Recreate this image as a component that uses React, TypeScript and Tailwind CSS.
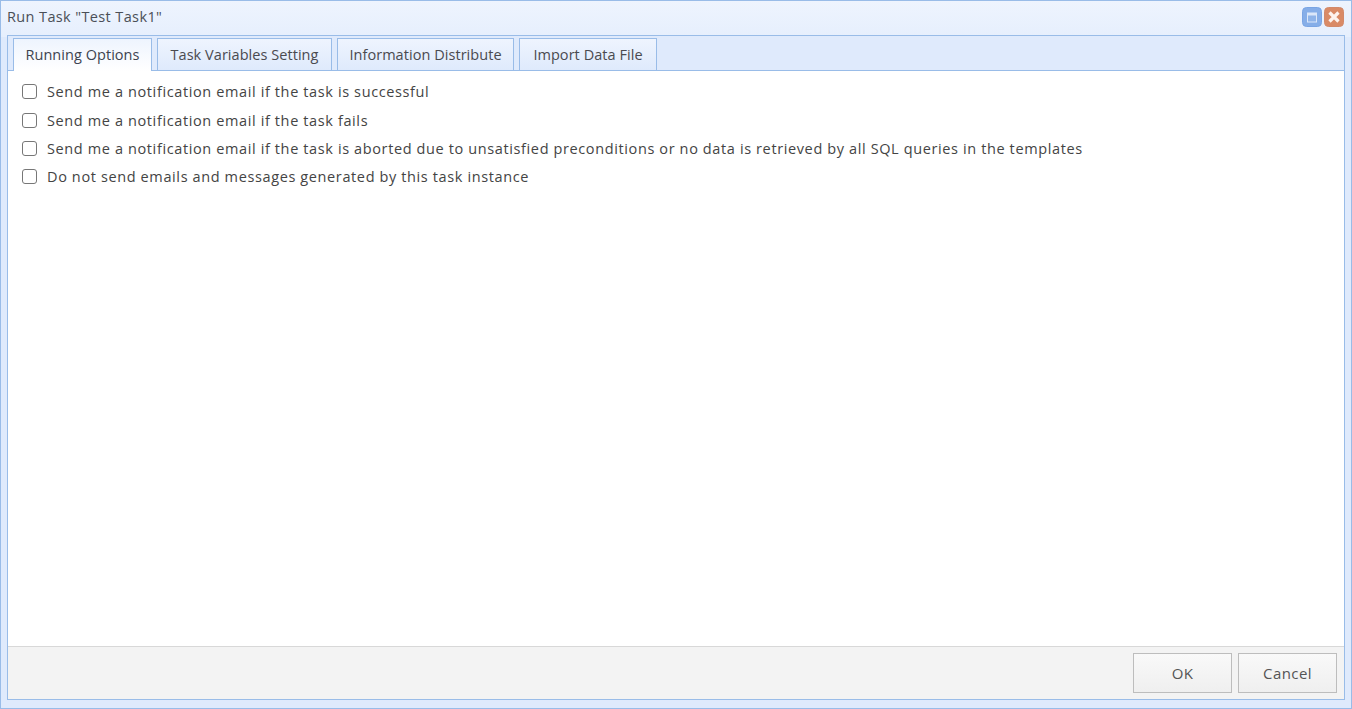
import React from 'react';

const TABS = [
  { label: 'Running Options', cls: 'w-[139px]' },
  { label: 'Task Variables Setting', cls: 'w-[175px]' },
  { label: 'Information Distribute', cls: 'w-[177px]' },
  { label: 'Import Data File', cls: 'w-[138px]' },
];

const OPTIONS = [
  { label: 'Send me a notification email if the task is successful', cls: 'h-[30px]' },
  { label: 'Send me a notification email if the task fails', cls: 'h-[28px]' },
  { label: 'Send me a notification email if the task is aborted due to unsatisfied preconditions or no data is retrieved by all SQL queries in the templates', cls: 'h-[28px]' },
  { label: 'Do not send emails and messages generated by this task instance', cls: 'h-[28px]' },
];

const App: React.FC = () => (
  <div className="h-[709px] w-[1352px] flex flex-col border border-[#99bce8] bg-[#dfeafc] bg-gradient-to-b from-[#eef4fe] to-[#e6effd] bg-[length:100%_36px] bg-no-repeat font-['Open_Sans',sans-serif] text-[14.5px] text-[#444]">
    {/* Title bar */}
    <div className="h-[34px] shrink-0 flex items-center justify-between pl-[6px] pr-[7px]">
      <span className="text-[#4a4f57] -mt-[2px] tracking-[0.38px]">Run Task "Test Task1"</span>
      <div className="flex items-center gap-[2px] -mt-[3px]">
        <svg width="20" height="20" viewBox="0 0 20 20">
          <rect x="0.5" y="0.5" width="19" height="19" rx="4" fill="#86aee8" stroke="#7aa5e4" />
          <rect x="5" y="5.5" width="10" height="10" fill="#dbe7f9" />
          <rect x="6" y="8.5" width="8" height="6" fill="#8fb4e9" />
        </svg>
        <svg width="20" height="20" viewBox="0 0 20 20">
          <rect x="0.5" y="0.5" width="19" height="19" rx="4" fill="#d98a66" stroke="#d2896a" />
          <path d="M5.5 5.5 L14.5 14.5 M14.5 5.5 L5.5 14.5" stroke="#fdf3ee" strokeWidth="3.2" />
        </svg>
      </div>
    </div>

    {/* Main panel */}
    <div className="flex-1 mx-[6px] mb-[8px] flex flex-col border border-[#99bce8] bg-white min-h-0">
      <div className="h-[35px] shrink-0 flex items-end gap-[5px] pl-[5px] bg-[#dfeafc] border-b border-[#99bce8]">
        {TABS.map((t, i) => (
          <div
            key={t.label}
            className={
              i === 0
                ? `${t.cls} h-[33px] -mb-px flex items-center justify-center border border-b-0 border-[#99bce8] bg-gradient-to-b from-[#eef4fe] to-white text-[#3d4450] whitespace-nowrap tracking-[0.05px]`
                : `${t.cls} h-[33px] -mb-px flex items-center justify-center border border-[#99bce8] bg-gradient-to-b from-[#eef4fe] to-[#dfeafc] text-[#4a4a50] whitespace-nowrap tracking-[0.05px]`
            }
          >
            {t.label}
          </div>
        ))}
      </div>

      <div className="flex-1 pt-[5px] pl-[14px] min-h-0">
        {OPTIONS.map((o) => (
          <label key={o.label} className={`flex items-center gap-[10px] ${o.cls}`}>
            <span className="w-[15px] h-[15px] rounded-[3px] border border-[#777] bg-white shrink-0" />
            <span className="tracking-[0.62px] pt-[2px]">{o.label}</span>
          </label>
        ))}
      </div>

      <div className="h-[53px] shrink-0 flex items-center justify-end gap-[6px] pr-[7px] bg-[#f3f3f3] border-t border-[#d8d8d8]">
        {['OK', 'Cancel'].map((b) => (
          <button key={b} className="w-[99px] h-[40px] border border-[#bdbdbd] bg-gradient-to-b from-[#f9f9f9] to-[#efefef] text-[#555] text-[15px] tracking-[0.4px]">
            {b}
          </button>
        ))}
      </div>
    </div>
  </div>
);

export default App;
